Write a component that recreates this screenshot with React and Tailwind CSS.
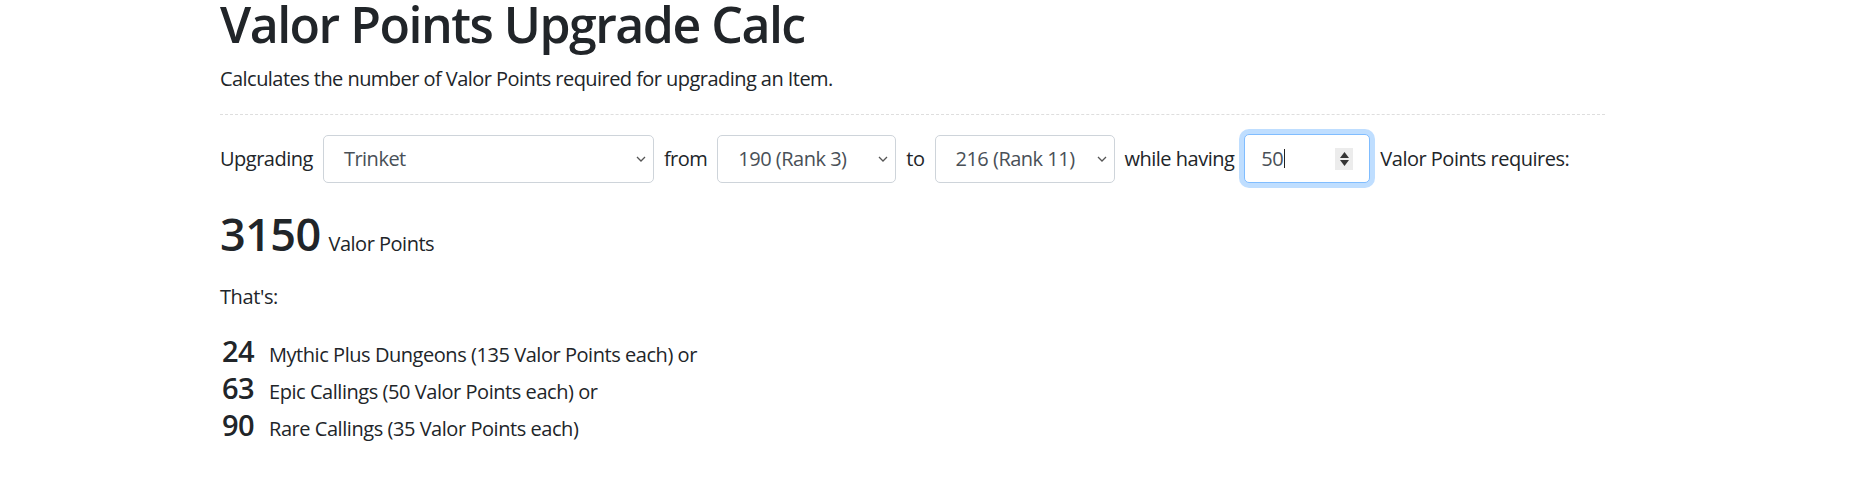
import React from 'react';

const font = "font-['Open_Sans','Liberation_Sans',sans-serif]";

function Chevron() {
  return (
    <svg width="10" height="6" viewBox="0 0 10 6" className="shrink-0">
      <path d="M1 1l4 4 4-4" fill="none" stroke="#555" strokeWidth="1.3" />
    </svg>
  );
}

function Select({ value, width }) {
  return (
    <div
      className={`flex h-[48px] items-center justify-between rounded-[5px] border border-[#ced4da] bg-white pl-[20px] pr-[7px] text-[#495057] ${width}`}
    >
      <span>{value}</span>
      <Chevron />
    </div>
  );
}

function Spinner() {
  return (
    <div className="flex h-[22px] w-[18px] flex-col items-center justify-center gap-[2px] bg-[#ececec]">
      <svg width="9" height="6" viewBox="0 0 9 6">
        <path d="M4.5 0L9 6H0z" fill="#333" />
      </svg>
      <svg width="9" height="6" viewBox="0 0 9 6">
        <path d="M0 0h9L4.5 6z" fill="#333" />
      </svg>
    </div>
  );
}

const results = [
  { n: 24, text: 'Mythic Plus Dungeons (135 Valor Points each) or' },
  { n: 63, text: 'Epic Callings (50 Valor Points each) or' },
  { n: 90, text: 'Rare Callings (35 Valor Points each)' },
];

export default function App() {
  return (
    <div className={`h-[497px] w-full overflow-hidden bg-white text-[20px] text-[#212529] ${font}`}>
      <div className="ml-[220px] mt-[-6px] w-[1385px]">
        {/* Header */}
        <h1 className="mb-[10px] text-[50px] font-semibold leading-[60px] tracking-[-1.5px]">Valor Points Upgrade Calc</h1>
        <p className="leading-[30px] tracking-[-0.55px]">Calculates the number of Valor Points required for upgrading an Item.</p>
        <div className="mt-[20px] border-t border-dashed border-[#dedede]" />

        {/* Form row */}
        <div className="mt-[19px] flex items-center gap-[10px] tracking-[-0.5px]">
          <span>Upgrading</span>
          <Select value="Trinket" width="w-[331px]" />
          <span>from</span>
          <Select value="190 (Rank 3)" width="w-[179px]" />
          <span>to</span>
          <Select value="216 (Rank 11)" width="w-[180px]" />
          <span>while having</span>
          <div className="flex h-[49px] w-[126px] items-center justify-between rounded-[5px] border border-[#80bdff] bg-white pl-[16px] pr-[16px] text-[#495057] shadow-[0_0_0_5px_rgba(0,123,255,0.25)]">
            <span className="flex items-center">
              50<span className="ml-[1px] inline-block h-[19px] w-[1px] bg-[#222]" />
            </span>
            <Spinner />
          </div>
          <span>Valor Points requires:</span>
        </div>

        {/* Result */}
        <div className="mt-[27px] flex items-baseline">
          <span className="text-[45px] font-semibold leading-[48px] tracking-[-0.6px]">3150</span>
          <span className="ml-[8px] tracking-[-0.5px]">Valor Points</span>
        </div>
        <p className="mt-[23px] leading-[30px] tracking-[-0.4px]">That's:</p>

        <div className="mt-[20px] flex flex-col">
          {results.map((r) => (
            <div key={r.n} className="flex h-[37px] items-baseline">
              <span className="w-[49px] pl-[2px] text-[29px] font-semibold leading-[37px] tracking-[-0.5px]">{r.n}</span>
              <span className="tracking-[-0.45px]">{r.text}</span>
            </div>
          ))}
        </div>
      </div>
    </div>
  );
}
